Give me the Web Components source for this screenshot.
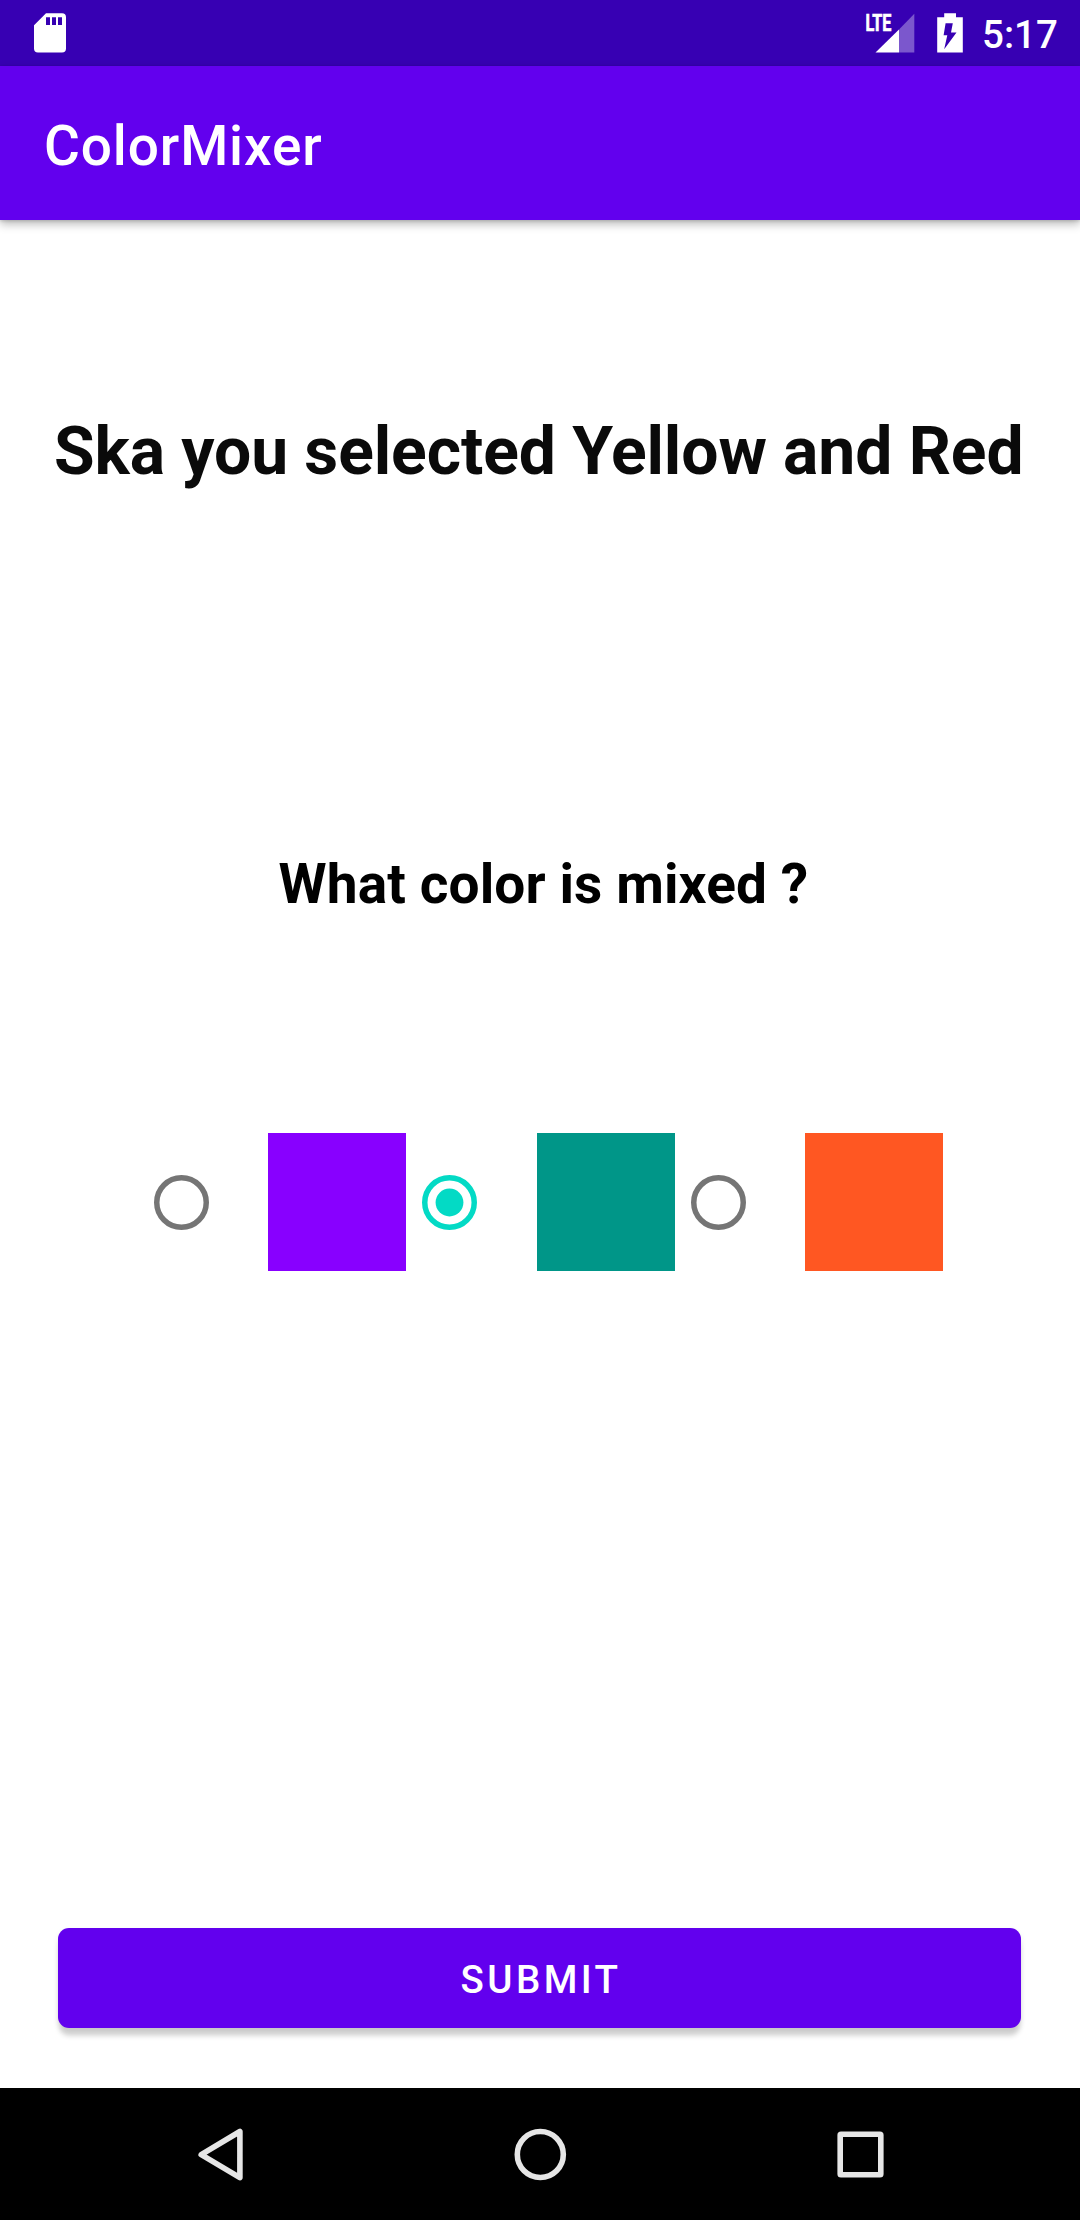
<!DOCTYPE html>
<html lang="en">
<head>
<meta charset="utf-8">
<title>ColorMixer</title>
<style>
html, body { margin: 0; background: #fff; }
body { font-family: Roboto, "Liberation Sans", sans-serif; }
</style>
</head>
<body>
<mixer-screen></mixer-screen>
<script>
const define = (name, html, setup) => customElements.define(name, class extends HTMLElement {
  constructor() {
    super();
    this.attachShadow({ mode: 'open' }).innerHTML = html;
  }
  connectedCallback() { if (setup) setup(this, this.shadowRoot); }
});

define('status-bar', `
<style>
:host { display: flex; justify-content: space-between; height: 66px; background: #3700b3; color: #fff; box-sizing: border-box; padding: 0 22px 0 34px; }
svg { display: block; flex: none; }
.right { display: flex; }
.time { font-size: 38.5px; font-weight: 500; line-height: 45px; padding-top: 12px; white-space: nowrap; width: 76px; }
</style>
<svg width="32" height="66" viewBox="34 0 32 66"><path fill="#fff" fill-rule="evenodd" d="M46 13.3H62Q66 13.3 66 17.3V48.6Q66 52.6 62 52.6H38Q34 52.6 34 48.6V25.2ZM46 17.2V25H50V17.2ZM52 17.2V25H56V17.2ZM58 17.2V25H62V17.2Z"/></svg>
<div class="right">
<svg width="118" height="66" viewBox="864 0 118 66">
<path fill="#fff" fill-opacity=".34" d="M899 29.5L914.3 13.7V52.5H899Z"/>
<path fill="#fff" d="M875.5 52.5L899 29.5V52.5Z"/>
<text x="865.4" y="31" font-size="23" font-weight="700" fill="#fff" stroke="#fff" stroke-width=".7" font-family="Roboto, 'Liberation Sans', sans-serif" textLength="26" lengthAdjust="spacingAndGlyphs">LTE</text>
<path fill="#fff" fill-rule="evenodd" d="M944.2 13.3H956V17.2H962.8V52.6H937.2V17.2H944.2ZM945.6 23.3L943.6 35.3H947.3L944.2 49.2L956.5 32.6H951L952.8 23.3Z"/>
</svg>
<span class="time"><slot></slot></span>
</div>`);

define('app-bar', `
<style>
:host { display: block; height: 154px; box-sizing: border-box; padding: 48px 44px 0; background: #6200ee; color: #fff; box-shadow: 0 4px 9px rgba(0,0,0,.28), 0 1px 3px rgba(0,0,0,.14); }
h1 { margin: 0; font-size: 55px; line-height: 64px; font-weight: 500; letter-spacing: .87px; white-space: nowrap; }
</style>
<h1><slot></slot></h1>`);

define('color-option', `
<style>
:host { display: flex; align-items: center; gap: 59.5px; }
.swatch { width: 138px; height: 138px; background: var(--swatch); }
svg { display: block; width: 55px; height: 55px; }
.ring { fill: none; stroke: #757575; stroke-width: 5.5; }
.dot { display: none; fill: #03dac5; }
:host([checked]) .ring { stroke: #03dac5; }
:host([checked]) .dot { display: block; }
</style>
<svg viewBox="0 0 55 55"><circle class="ring" cx="27.5" cy="27.5" r="24.75"/><circle class="dot" cx="27.5" cy="27.5" r="13.9"/></svg>
<div class="swatch"></div>`, (host) => host.style.setProperty('--swatch', host.getAttribute('color')));

define('submit-button', `
<style>
:host { display: block; }
button { display: block; width: 963px; height: 100px; margin: 0; border: 0; padding: 2px 0 0 3px; border-radius: 11px; background: #6200ee; color: #fff; font: 500 38.5px/45px Roboto, "Liberation Sans", sans-serif; letter-spacing: 3.44px; text-align: center; box-shadow: 0 9px 5px -1px rgba(0,0,0,.16), 0 3px 6px rgba(0,0,0,.08); }
</style>
<button type="button"><slot></slot></button>`);

define('nav-bar', `
<style>
:host { display: flex; height: 132px; background: #000; padding: 0 196px; box-sizing: border-box; justify-content: space-between; align-items: center; }
svg { display: block; width: 50px; height: 60px; fill: none; stroke: #e6e6e6; stroke-width: 5.6; stroke-linejoin: round; }
svg:nth-of-type(2) { width: 56px; }
</style>
<svg viewBox="196 2124 50 60"><path d="M201.2 2154.6L239.9 2131.5V2177.6Z"/></svg>
<svg viewBox="512 2124 56 60"><circle cx="540.3" cy="2154.5" r="23"/></svg>
<svg viewBox="834 2124 50 60"><rect x="840.2" y="2134.2" width="40.6" height="40.6" rx=".8"/></svg>`);

define('mixer-screen', `
<style>
:host { display: flex; flex-direction: column; width: 1080px; height: 2220px; overflow: hidden; background: #fff; color: #000; }
app-bar { position: relative; flex: none; }
status-bar, nav-bar { flex: none; }
main { flex: 1; display: flex; flex-direction: column; min-height: 0; }
h2, p { margin: 0; font-weight: 700; white-space: nowrap; }
h2 { margin: 193px 0 0 54px; font-size: 66px; line-height: 77px; letter-spacing: -.08px; color: #0a0a0a; }
p { margin: 362px 0 0 278.6px; font-size: 55px; line-height: 64px; letter-spacing: .1px; }
.options { display: flex; gap: 16.2px; margin: 217px 0 0 153.5px; }
submit-button { margin: auto 0 60px 58px; }
</style>
<status-bar>5:17</status-bar>
<app-bar>ColorMixer</app-bar>
<main>
<h2>Ska you selected Yellow and Red</h2>
<p>What color is mixed ?</p>
<div class="options">
<color-option color="#8800ff"></color-option>
<color-option color="#009688" checked></color-option>
<color-option color="#ff5722"></color-option>
</div>
<submit-button>SUBMIT</submit-button>
</main>
<nav-bar></nav-bar>`);
</script>
</body>
</html>
